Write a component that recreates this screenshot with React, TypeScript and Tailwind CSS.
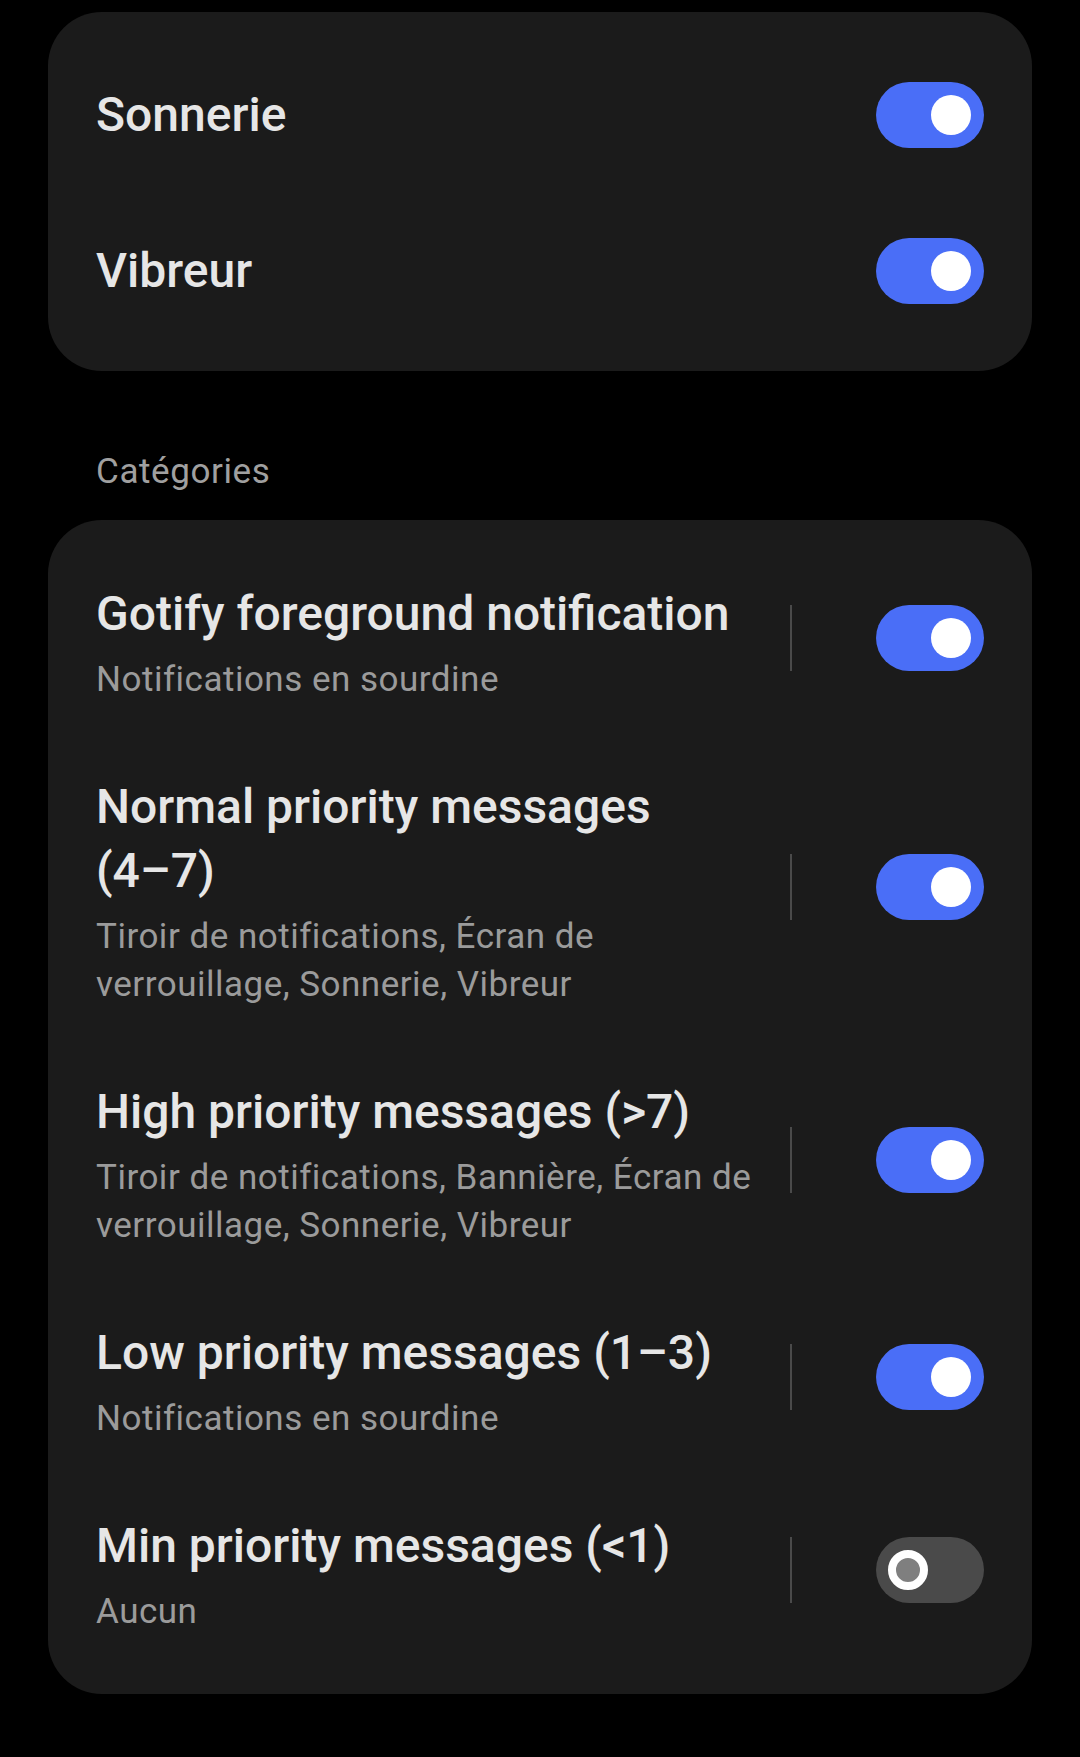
import React from 'react'

interface Category {
  title: string
  tail: string
  summary: string
  enabled: boolean
}

const categories: Category[] = [
  { title: 'Gotify foreground', tail: 'notification', summary: 'Notifications en sourdine', enabled: true },
  {
    title: 'Normal priority messages',
    tail: '(4–7)',
    summary: 'Tiroir de notifications, Écran de verrouillage, Sonnerie, Vibreur',
    enabled: true,
  },
  {
    title: 'High priority messages',
    tail: '(>7)',
    summary: 'Tiroir de notifications, Bannière, Écran de verrouillage, Sonnerie, Vibreur',
    enabled: true,
  },
  { title: 'Low priority messages', tail: '(1–3)', summary: 'Notifications en sourdine', enabled: true },
  { title: 'Min priority messages', tail: '(<1)', summary: 'Aucun', enabled: false },
]

function Toggle({ on }: { on: boolean }) {
  if (on) {
    return (
      <div className="flex h-[66px] w-[108px] flex-shrink-0 items-center justify-end rounded-full bg-[#4a6ef7] px-[13px]">
        <div className="h-[40px] w-[40px] rounded-full bg-white" />
      </div>
    )
  }
  return (
    <div className="flex h-[66px] w-[108px] flex-shrink-0 items-center justify-start rounded-full bg-[#4a4a4a] px-[12px]">
      <div className="h-[40px] w-[40px] rounded-full border-[8px] border-white bg-[#7f7f7f]" />
    </div>
  )
}

export default function App() {
  return (
    <div className="min-h-[1757px] w-[1080px] bg-black px-[48px] pt-[12px] font-['Roboto','Noto_Sans',sans-serif]">
      {/* Sound settings */}
      <div className="rounded-[54px] bg-[#1b1b1b] px-[48px] pt-[25px] pb-[22px]">
        {['Sonnerie', 'Vibreur'].map(label => (
          <div key={label} className="flex h-[156px] items-center justify-between">
            <span className="text-[48px] leading-[64px] font-medium text-[#e6e6e6]">{label}</span>
            <Toggle on />
          </div>
        ))}
      </div>

      <div className="mt-[77px] px-[48px] text-[35px] leading-[48px] tracking-[0.6px] text-[#a0a0a0]">
        Catégories
      </div>

      {/* Channels */}
      <div className="mt-[24px] rounded-[54px] bg-[#1b1b1b] px-[48px] pt-[26px] pb-[23px]">
        {categories.map(cat => (
          <div key={cat.title} className="flex items-center py-[35.5px]">
            <div className="w-[670px] flex-shrink-0">
              <p className="text-[48px] leading-[64px] font-medium text-[#e6e6e6]">
                {cat.title} <span className="whitespace-nowrap">{cat.tail}</span>
              </p>
              <p className="mt-[10px] text-[35px] leading-[48px] tracking-[0.5px] text-[#9b9b9b]">
                {cat.summary}
              </p>
            </div>
            <div className="mb-[10px] ml-[24px] flex flex-1 items-center justify-between">
              <div className="h-[66px] w-[2px] bg-[#4a4a4a]" />
              <Toggle on={cat.enabled} />
            </div>
          </div>
        ))}
      </div>
    </div>
  )
}
